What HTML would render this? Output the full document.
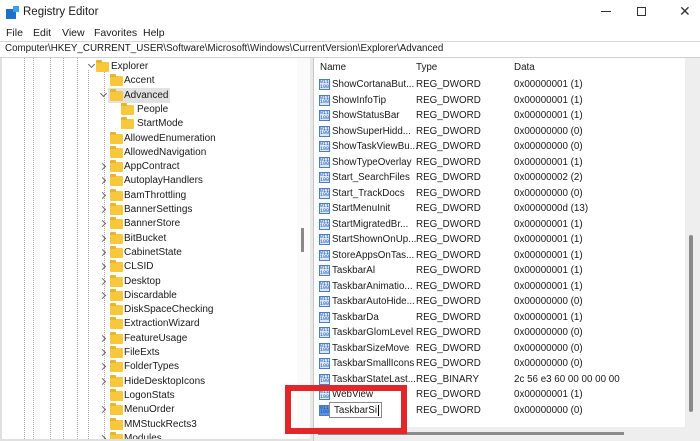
<!DOCTYPE html>
<html><head><style>
*{margin:0;padding:0;box-sizing:border-box}
html,body{width:700px;height:441px;overflow:hidden}
body{background:#fff;font-family:"Liberation Sans",sans-serif;font-size:9.8px;color:#1a1a1a;position:relative}
.a{position:absolute;white-space:nowrap}
.dl{position:absolute;top:58px;height:383px;border-left:1px dotted #a8a8a8}
.fd{position:absolute;width:13px;height:10px;background:#f8c83c;border-radius:1px}
.fd:before{content:"";position:absolute;left:0;top:-2px;width:6px;height:3px;background:#e8b430;border-radius:1px 1px 0 0}
.ch{position:absolute;width:5px;height:5px;border-right:1px solid #666;border-bottom:1px solid #666}
.ic{position:absolute;width:11px;height:11px;background:#dbe8f8;border:1px solid #4a7cc8;font-size:5px;line-height:4.5px;color:#1d4fa8;text-align:center;overflow:hidden;font-family:"Liberation Mono",monospace}
</style></head><body>
<div class="a" style="left:6px;top:6px;width:13px;height:13px;">
<div style="position:absolute;left:0;top:3px;width:10px;height:10px;background:#1e6fc8"></div>
<div style="position:absolute;left:7px;top:0;width:6px;height:6px;background:#3aa0f0"></div></div>
<div class="a" style="left:23px;top:6px;font-size:11.5px">Registry Editor</div>
<div class="a" style="left:601px;top:11px;width:10px;border-top:1px solid #333"></div>
<div class="a" style="left:637px;top:7px;width:9px;height:9px;border:1px solid #333"></div>
<div class="a" style="left:679px;top:3px;font-size:14px;color:#333">✕</div>
<div class="a" style="left:6px;top:27px;font-size:10.5px">File</div>
<div class="a" style="left:33px;top:27px;font-size:10.5px">Edit</div>
<div class="a" style="left:62px;top:27px;font-size:10.5px">View</div>
<div class="a" style="left:94px;top:27px;font-size:10.5px">Favorites</div>
<div class="a" style="left:143px;top:27px;font-size:10.5px">Help</div>
<div class="a" style="left:0;top:41px;width:700px;height:17px;border-top:1px solid #d8d8d8;border-bottom:1px solid #d0d0d0"></div>
<div class="a" style="left:5px;top:43px;font-size:9.8px">Computer\HKEY_CURRENT_USER\Software\Microsoft\Windows\CurrentVersion\Explorer\Advanced</div>
<div class="dl" style="left:24px"></div><div class="dl" style="left:33px"></div><div class="dl" style="left:50px"></div><div class="dl" style="left:63px"></div><div class="dl" style="left:77px"></div><div class="dl" style="left:88px;top:70px"></div>
<div class="dl" style="left:104px;top:72px"></div>
<div class="a" style="left:0;top:58px;width:2px;height:383px;background:#e0e0e0"></div>
<div id="tree"></div>
<div class="a" style="left:297px;top:58px;width:13px;height:383px;background:#fafafa"></div>
<div class="a" style="left:301px;top:228px;width:3px;height:24px;background:#8a8a8a"></div>
<div class="a" style="left:310px;top:58px;width:3px;height:383px;background:#e8e8e8"></div>
<div class="a" style="left:0;top:439px;width:310px;height:2px;background:#e0e0e0"></div>
<div class="a" style="left:313px;top:58px;width:1px;height:383px;background:#c8c8c8"></div>
<div class="a" style="left:685px;top:58px;width:15px;height:383px;background:#eeeeee"></div>
<div class="a" style="left:689px;top:235px;width:4px;height:177px;background:#8a8a8a;border-radius:2px"></div>
<div class="a" style="left:320px;top:62px">Name</div>
<div class="a" style="left:416px;top:62px">Type</div>
<div class="a" style="left:514px;top:62px">Data</div>
<div id="rows"></div>
<div class="a" style="left:314px;top:427px;width:386px;height:14px;background:#eeeeee"></div>
<div class="a" style="left:318px;top:432px;width:306px;height:3px;background:#8a8a8a"></div>
<div class="a" style="left:329px;top:402px;width:53px;height:16px;border:1px solid #888;background:#fff;padding:2px 0 0 4px">TaskbarSi<span style="border-left:1px solid #000;margin-left:1px"></span></div>
<div class="a" style="left:285px;top:385px;width:122px;height:49px;border:6px solid #e3262a"></div>
<script>
var t=[[88,96,111,"Explorer","v"],[null,110,124,"Accent"],[100,110,124,"Advanced","v",1],[null,121,137,"People"],[null,121,137,"StartMode"]];
var L=["AllowedEnumeration","AllowedNavigation",">AppContract",">AutoplayHandlers",">BamThrottling",">BannerSettings",">BannerStore",">BitBucket",">CabinetState",">CLSID",">Desktop",">Discardable","DiskSpaceChecking","ExtractionWizard",">FeatureUsage",">FileExts",">FolderTypes",">HideDesktopIcons","LogonStats",">MenuOrder","MMStuckRects3",">Modules"];
L.forEach(function(s){var c=s[0]==">";t.push([c?100:null,110,124,c?s.slice(1):s,c?">":null]);});
var h="";t.forEach(function(r,i){var y=60+i*14.3;
if(r[0]!=null){if(r[4]=="v")h+='<div class="ch" style="left:'+(r[0]+1)+'px;top:'+(y+2)+'px;transform:rotate(45deg)"></div>';else h+='<div class="ch" style="left:'+r[0]+'px;top:'+(y+4)+'px;transform:rotate(-45deg)"></div>';}
if(r[5])h+='<div class="a" style="left:108px;top:'+(y-1)+'px;width:62px;height:15px;background:#e2e2e2"></div>';
h+='<div class="fd" style="left:'+r[1]+'px;top:'+(y+2)+'px"></div><div class="a" style="left:'+r[2]+'px;top:'+(y+1)+'px;font-size:10px">'+r[3]+'</div>';});
document.getElementById("tree").innerHTML=h;
var R=[["ShowCortanaBut...","REG_DWORD","0x00000001 (1)"],["ShowInfoTip","REG_DWORD","0x00000001 (1)"],["ShowStatusBar","REG_DWORD","0x00000001 (1)"],["ShowSuperHidd...","REG_DWORD","0x00000000 (0)"],["ShowTaskViewBu...","REG_DWORD","0x00000000 (0)"],["ShowTypeOverlay","REG_DWORD","0x00000001 (1)"],["Start_SearchFiles","REG_DWORD","0x00000002 (2)"],["Start_TrackDocs","REG_DWORD","0x00000000 (0)"],["StartMenuInit","REG_DWORD","0x0000000d (13)"],["StartMigratedBr...","REG_DWORD","0x00000001 (1)"],["StartShownOnUp...","REG_DWORD","0x00000001 (1)"],["StoreAppsOnTas...","REG_DWORD","0x00000001 (1)"],["TaskbarAl","REG_DWORD","0x00000001 (1)"],["TaskbarAnimatio...","REG_DWORD","0x00000001 (1)"],["TaskbarAutoHide...","REG_DWORD","0x00000000 (0)"],["TaskbarDa","REG_DWORD","0x00000001 (1)"],["TaskbarGlomLevel","REG_DWORD","0x00000000 (0)"],["TaskbarSizeMove","REG_DWORD","0x00000000 (0)"],["TaskbarSmallIcons","REG_DWORD","0x00000000 (0)"],["TaskbarStateLast...","REG_BINARY","2c 56 e3 60 00 00 00 00"],["WebView","REG_DWORD","0x00000001 (1)"],["","REG_DWORD","0x00000000 (0)"]];
h="";R.forEach(function(r,i){var y=78+i*15.5;
h+='<div class="ic" style="left:319px;top:'+(y+1)+'px'+(i==21?';background:#5a96e0':'')+'">011<br>100</div>';
h+='<div class="a" style="left:332px;top:'+(y+1)+'px">'+r[0]+'</div><div class="a" style="left:416px;top:'+(y+1)+'px">'+r[1]+'</div><div class="a" style="left:514px;top:'+(y+1)+'px">'+r[2]+'</div>';});
document.getElementById("rows").innerHTML=h;
</script>
</body></html>
